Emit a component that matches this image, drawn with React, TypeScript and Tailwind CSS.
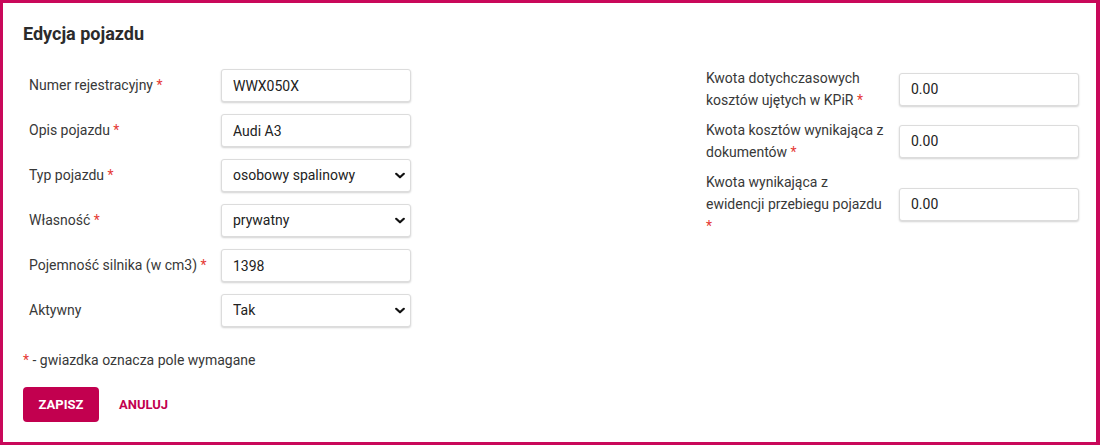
import { ChangeEvent, useState } from "react"

const Req = () => <span className="text-[#e53935]">*</span>

function Chevron() {
  return (
    <svg className="pointer-events-none absolute right-[6px] top-1/2 -translate-y-1/2" width="10" height="7" viewBox="0 0 10 7">
      <path d="M1.2 1.2 L5 4.8 L8.8 1.2" fill="none" stroke="#111" strokeWidth="2.2" strokeLinecap="round" strokeLinejoin="round" />
    </svg>
  )
}

const inputCls =
  "h-[33px] w-full rounded-[3px] border border-[#dcdcdc] bg-white px-[11px] text-[14px] text-[#222] shadow-[0_1px_2px_rgba(0,0,0,0.18)] outline-none"

function TextField({ value }: { value: string }) {
  const [v, setV] = useState(value)
  return <input className={inputCls} value={v} onChange={(e: ChangeEvent<HTMLInputElement>) => setV(e.target.value)} />
}

function SelectField({ value, options }: { value: string; options: string[] }) {
  const [v, setV] = useState(value)
  return (
    <div className="relative w-full">
      <select
        className={inputCls + " appearance-none pr-7"}
        value={v}
        onChange={(e) => setV(e.target.value)}
      >
        {options.map((o) => (
          <option key={o}>{o}</option>
        ))}
      </select>
      <Chevron />
    </div>
  )
}

export default function App() {
  const left = [
    { label: "Numer rejestracyjny", req: true, field: <TextField value="WWX050X" /> },
    { label: "Opis pojazdu", req: true, field: <TextField value="Audi A3" /> },
    {
      label: "Typ pojazdu",
      req: true,
      field: <SelectField value="osobowy spalinowy" options={["osobowy spalinowy", "osobowy elektryczny", "ciężarowy"]} />,
    },
    { label: "Własność", req: true, field: <SelectField value="prywatny" options={["prywatny", "firmowy"]} /> },
    { label: "Pojemność silnika (w cm3)", req: true, field: <TextField value="1398" /> },
    { label: "Aktywny", req: false, field: <SelectField value="Tak" options={["Tak", "Nie"]} /> },
  ]

  const right = [
    { label: "Kwota dotychczasowych kosztów ujętych w KPiR", value: "0.00" },
    { label: "Kwota kosztów wynikająca z dokumentów", value: "0.00" },
    { label: "Kwota wynikająca z ewidencji przebiegu pojazdu", value: "0.00" },
  ]

  return (
    <div className="h-[445px] w-[1100px] border-[3px] border-r-4 border-[#c9085a] bg-white px-5 pt-[20px] font-['Roboto',sans-serif] text-[#383838]">
      <h1 className="text-[18px] font-bold leading-[22px] text-[#2b2b2b]">Edycja pojazdu</h1>

      <div className="mt-[22px] flex">
        <div className="flex flex-col gap-[12px] pl-[6px] pt-[2px]">
          {left.map((r) => (
            <div key={r.label} className="flex h-[33px] items-center">
              <div className="w-[192px] text-[14px]">
                {r.label} {r.req && <Req />}
              </div>
              <div className="w-[190px]">{r.field}</div>
            </div>
          ))}
        </div>

        <div className="ml-[295px] flex flex-col gap-[8px]">
          {right.map((r) => (
            <div key={r.label} className="flex items-center">
              <div className="mr-[11px] w-[182px] text-[14px] leading-[22px]">
                {r.label} <Req />
              </div>
              <div className="w-[180px]">
                <TextField value={r.value} />
              </div>
            </div>
          ))}
        </div>
      </div>

      <p className="mt-[23px] text-[14px] leading-[20px]">
        <Req /> - gwiazdka oznacza pole wymagane
      </p>

      <div className="mt-[17px] flex items-center">
        <button className="h-[35px] w-[76px] rounded-[4px] bg-[#c2004f] text-[13px] font-bold text-white">ZAPISZ</button>
        <button className="ml-[20px] text-[13px] font-bold text-[#c2004f]">ANULUJ</button>
      </div>
    </div>
  )
}
